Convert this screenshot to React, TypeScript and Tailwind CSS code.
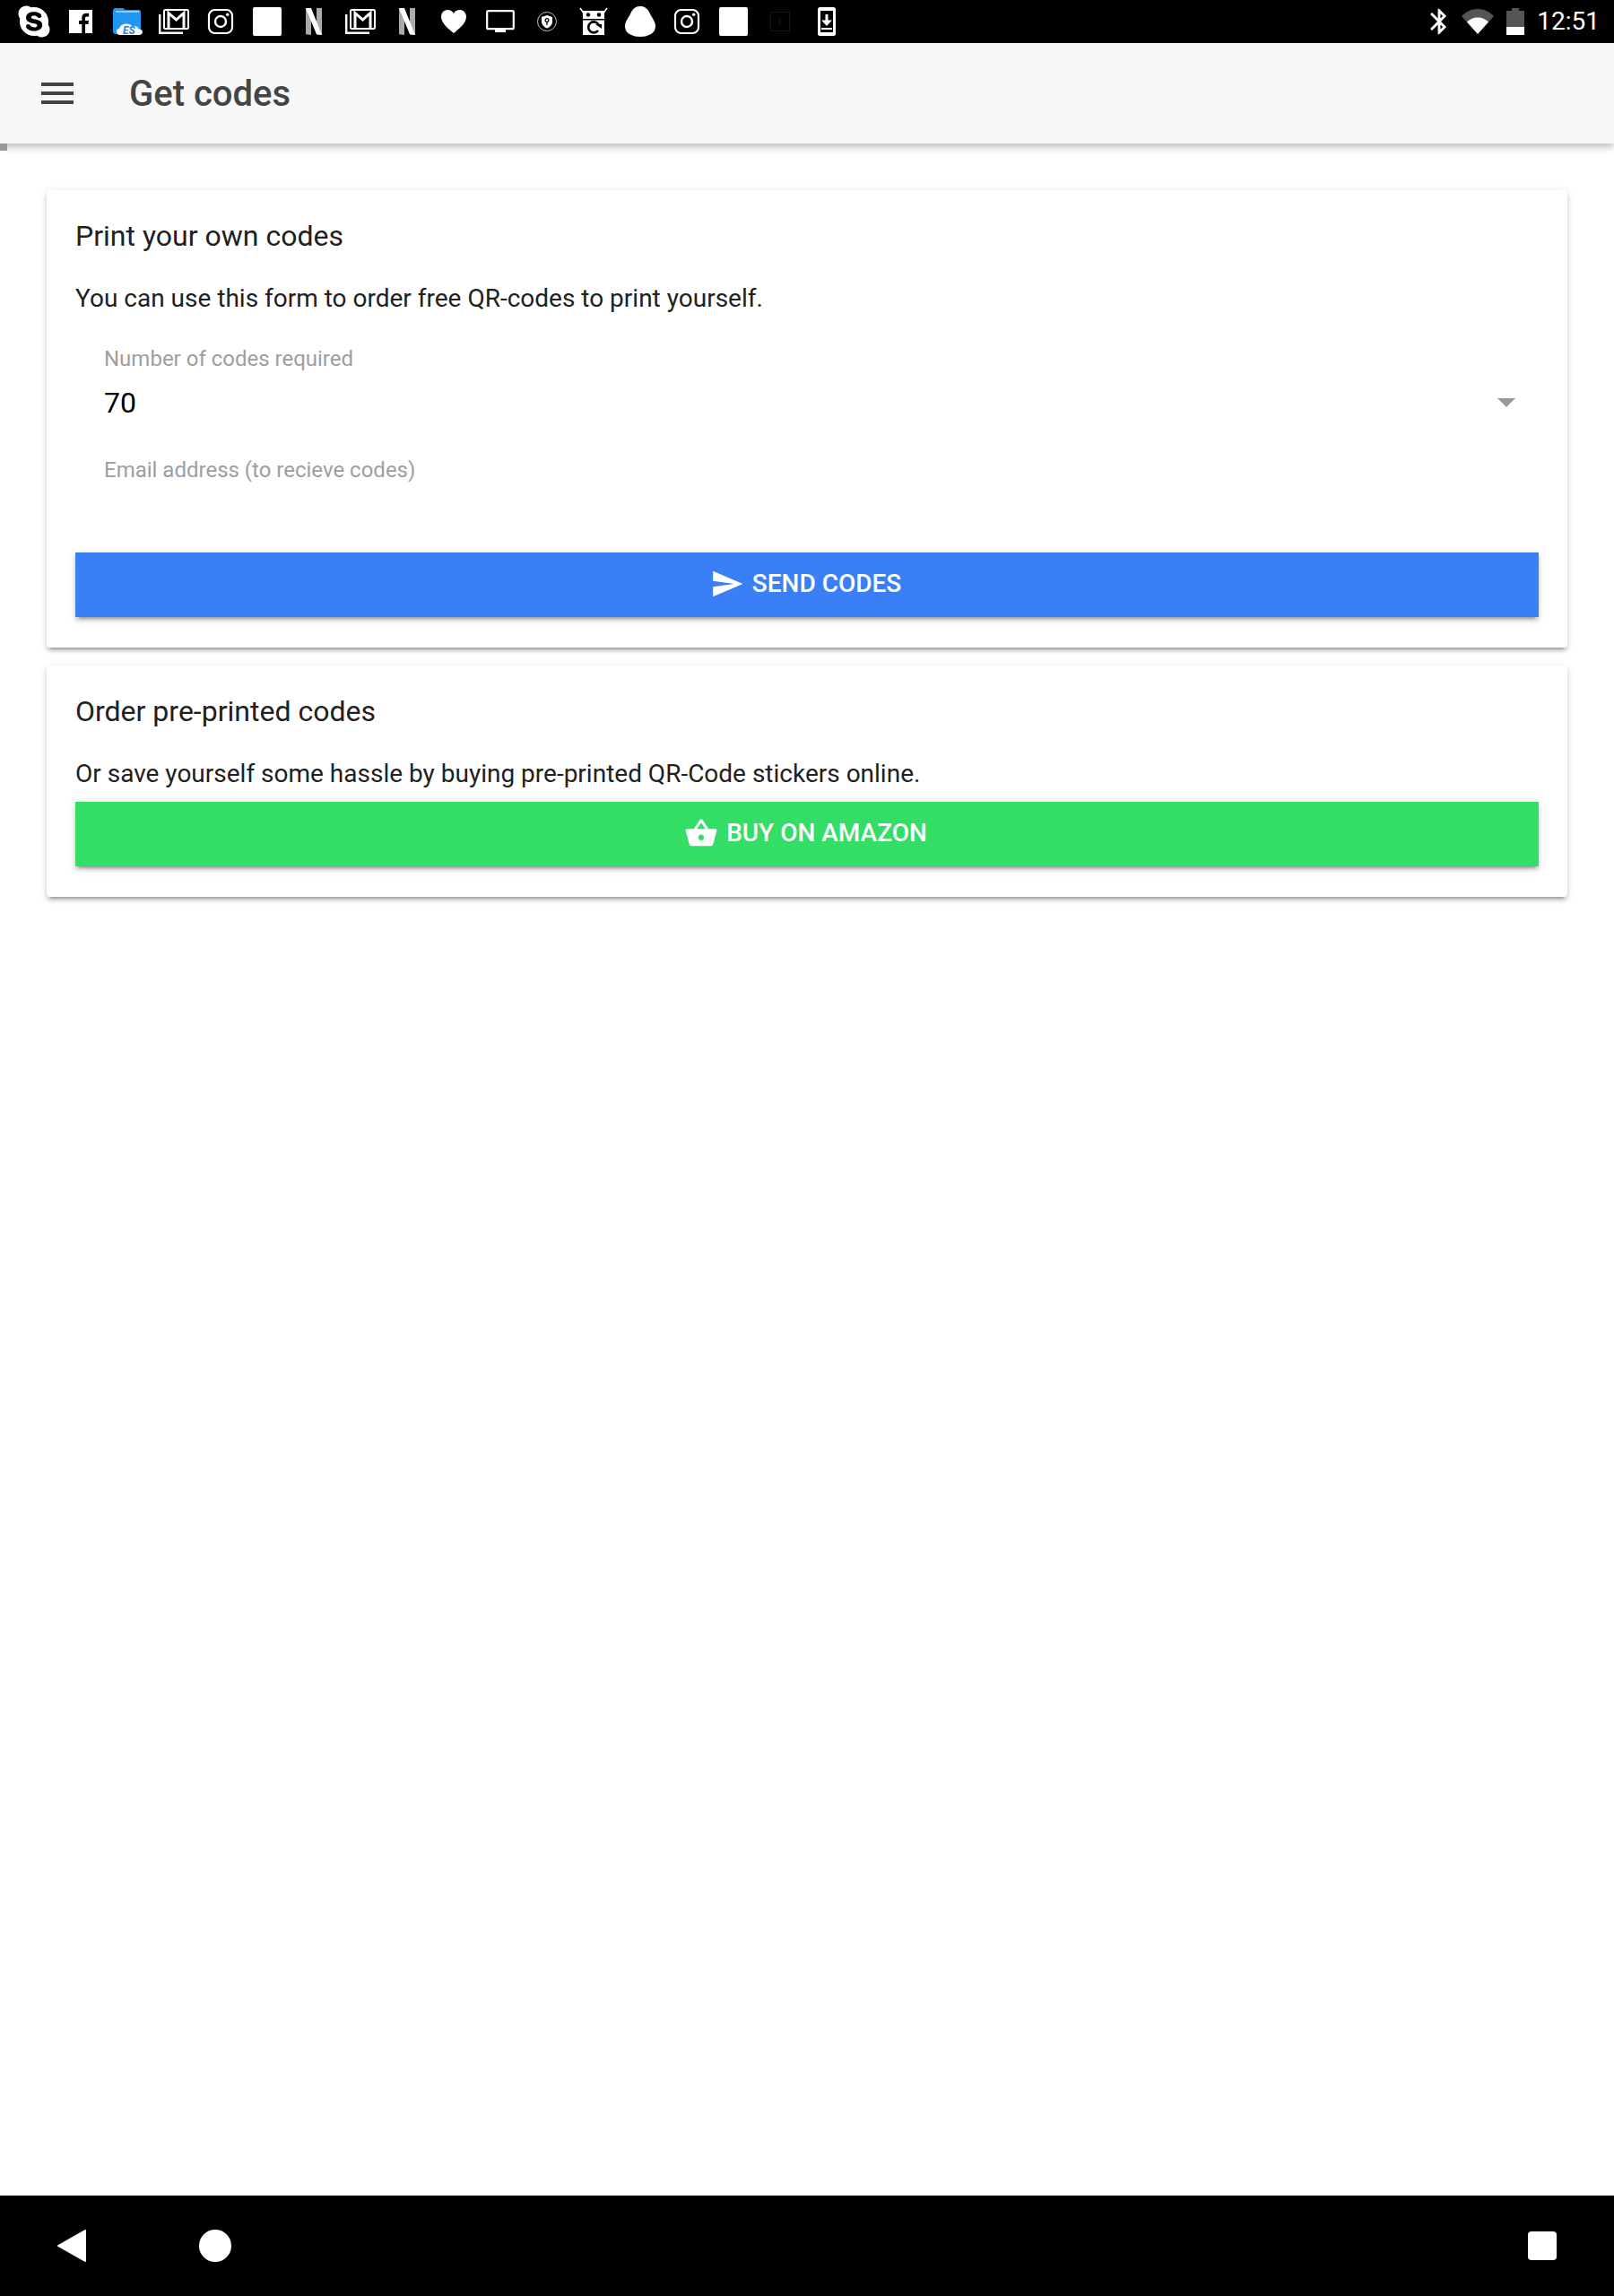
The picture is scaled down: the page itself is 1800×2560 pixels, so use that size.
import { FaSkype } from "react-icons/fa";
import { MdMenu, MdSend, MdShoppingBasket, MdBluetooth } from "react-icons/md";

const font = "font-['Roboto',sans-serif]";

function FacebookIcon() {
  return (
    <svg width="26" height="26" viewBox="0 0 26 26">
      <path fill="#fff" d="M0 0h26v26h-8V16h3.400l.6-4h-4V9.500c0-1.200.5-2 2-2h2.200V4c-.6-.1-1.700-.2-2.900-.2-3 0-5 1.800-5 5V12H11v4h3.300v10H0z" />
    </svg>
  );
}

function EsIcon() {
  return (
    <svg width="34" height="30" viewBox="0 0 34 30">
      <path fill="#2196f3" d="M1 3a3 3 0 0 1 3-3h8l3 2h15a2 2 0 0 1 2 2v22a3 3 0 0 1-3 3H4a3 3 0 0 1-3-3z" />
      <path fill="#90caf9" d="M4 3h26v2H4z" />
      <path fill="#fff" d="M9 30c-3 0-4-2-4-4 0-2 1.500-3 3-3.300C9 20 11.500 17.500 16 17.500c3 0 5 1 6 2.500 1.500-.2 5-.2 6 1 1 1 1.500 1.500 1.800 2.500 2 .2 4.200 1 4.200 3s-1.500 3.500-4 3.500z" />
      <text x="12" y="28.500" fontSize="12" fontWeight="700" fontStyle="italic" fill="#1d86ea" fontFamily="Roboto, sans-serif">ES</text>
    </svg>
  );
}

function MailStackIcon() {
  return (
    <svg width="34" height="28" viewBox="0 0 34 28" fill="none" stroke="#fff" strokeWidth="2">
      <path d="M1.200 6v20.800H27" strokeWidth="2.400" />
      <rect x="6" y="1.100" width="27" height="21" rx="1.500" />
      <path strokeWidth="3" d="M11 21V4.500l8.500 7.500L28 4.500V21" />
    </svg>
  );
}

function InstagramIcon() {
  return (
    <svg width="30" height="30" viewBox="0 0 30 30" fill="none" stroke="#fff">
      <rect x="2" y="2" width="26" height="26" rx="6.500" strokeWidth="2.200" />
      <circle cx="15" cy="15" r="6" strokeWidth="2.400" />
      <circle cx="22.700" cy="7.300" r="1.700" fill="#fff" stroke="none" />
    </svg>
  );
}

function SquareIcon() {
  return <div className="h-8 w-8 rounded-[2px] bg-white" />;
}

function NetflixIcon() {
  return (
    <svg width="18" height="30" viewBox="0 0 18 30">
      <path fill="#aaa" d="M0 0h6v30l-6-.8zM12 0h6v30l-6-.8z" />
      <path fill="#fff" d="M0 0h6l12 30-6-.8z" />
    </svg>
  );
}

function HeartIcon() {
  return (
    <svg width="30" height="28" viewBox="0 0 30 28">
      <path fill="#fff" d="M15 27C9 22 1 16 1 8.500 1 4 4.500 1 8 1c3 0 5.500 1.500 7 4 1.500-2.500 4-4 7-4 3.500 0 7 3 7 7.500C29 16 21 22 15 27z" />
    </svg>
  );
}

function MonitorIcon() {
  return (
    <svg width="32" height="26" viewBox="0 0 32 26">
      <rect x="1.200" y="1.200" width="29.600" height="20" rx="1.500" fill="none" stroke="#fff" strokeWidth="2.200" />
      <path fill="#fff" d="M10 22h12v3H10z" />
    </svg>
  );
}

function ShieldKeyIcon() {
  return (
    <svg width="24" height="24" viewBox="0 0 24 24">
      <circle cx="12" cy="12" r="10.500" fill="none" stroke="#bbb" strokeWidth="1" />
      <path fill="#fff" d="M12 5l6 2v5c0 3.500-2.500 6-6 7.500C8.500 18 6 15.500 6 12V7z" />
      <circle cx="12" cy="10.500" r="1.900" fill="none" stroke="#000" strokeWidth="1.200" />
      <path stroke="#000" strokeWidth="1.300" d="M12 12v4" />
    </svg>
  );
}

function RobotIcon() {
  return (
    <svg width="32" height="32" viewBox="0 0 32 32">
      <path stroke="#fff" strokeWidth="1.500" d="M1 1l3.500 5M31 1l-3.500 5" />
      <path fill="#fff" d="M4 4h24v9H4zM4 14.500h24V31H4z" />
      <circle cx="10" cy="8.500" r="2.200" fill="#000" />
      <circle cx="22" cy="8.500" r="2.200" fill="#000" />
      <path fill="none" stroke="#000" strokeWidth="2.600" d="M21 26a6 6 0 1 1 .5-6.500" />
      <path fill="#000" d="M18 19h7v5z" />
    </svg>
  );
}

function BlobIcon() {
  return (
    <svg width="34" height="34" viewBox="0 0 34 34">
      <path fill="#fff" d="M17 0c4.500 0 7.500 2 9.500 5.500 1.500 3 2.500 5 5 9 1.500 2.500 2.500 5 2.500 7.500 0 5-2.500 7.500-6 9.500-3 1.700-7 2.500-11 2.500s-8-.8-11-2.500c-3.500-2-6-4.500-6-9.500 0-2.500 1-5 2.500-7.500 2.500-4 3.500-6 5-9C9.500 2 12.500 0 17 0z" />
    </svg>
  );
}

function DimIcon() {
  return (
    <svg width="22" height="22" viewBox="0 0 22 22">
      <rect x=".5" y=".5" width="21" height="21" fill="none" stroke="#171717" />
      <path stroke="#222" d="M11 8v6" />
    </svg>
  );
}

function DownloadPhoneIcon() {
  return (
    <svg width="20" height="32" viewBox="0 0 20 32">
      <rect width="20" height="32" rx="2.500" fill="#fff" />
      <path fill="#000" d="M3 4h14v24H3z" />
      <path fill="#fff" d="M8.500 8h3v6.500H16L10 21 4 14.500h4.500zM4 23h12v2H4z" />
    </svg>
  );
}

function WifiIcon() {
  return (
    <svg width="36" height="28" viewBox="0 0 36 28">
      <path fill="#555" d="M0 8C5 3 11 0 18 0s13 3 18 8L18 28z" />
      <path fill="#fff" d="M6 14.500C9 11.500 13 9.500 18 9.500s9 2 12 5L18 28z" />
    </svg>
  );
}

function BatteryIcon() {
  return (
    <svg width="20" height="30" viewBox="0 0 20 30">
      <path fill="#555" d="M6 0h8v3h6v20H0V3h6z" />
      <path fill="#fff" d="M0 21h20v9H0z" />
    </svg>
  );
}

const notifications = [
  <FaSkype key="a" size={40} color="#fff" />,
  <FacebookIcon key="b" />,
  <EsIcon key="c" />,
  <MailStackIcon key="d" />,
  <InstagramIcon key="e" />,
  <SquareIcon key="f" />,
  <NetflixIcon key="g" />,
  <MailStackIcon key="h" />,
  <NetflixIcon key="i" />,
  <HeartIcon key="j" />,
  <MonitorIcon key="k" />,
  <ShieldKeyIcon key="l" />,
  <RobotIcon key="m" />,
  <BlobIcon key="n" />,
  <InstagramIcon key="o" />,
  <SquareIcon key="p" />,
  <DimIcon key="q" />,
  <DownloadPhoneIcon key="r" />,
];

function StatusBar() {
  return (
    <div className="flex h-12 shrink-0 items-center bg-black pl-3 pr-4">
      {notifications.map((icon) => (
        <div key={icon.key} className="flex h-12 w-[52px] items-center justify-center">
          {icon}
        </div>
      ))}
      <div className="ml-auto flex items-center">
        <MdBluetooth size={34} color="#fff" />
        <div className="ml-[8px]">
          <WifiIcon />
        </div>
        <div className="ml-[14px]">
          <BatteryIcon />
        </div>
        <span className="ml-[14px] text-[28px] leading-none text-white">12:51</span>
      </div>
    </div>
  );
}

function CardButton({ color, icon, label }: { color: string; icon: React.ReactNode; label: string }) {
  return (
    <button className={`flex h-[72px] w-full items-center justify-center gap-[9px] pb-[2px] pr-[3px] text-[28px] font-medium text-white shadow-[0_6px_2px_-4px_rgba(0,0,0,0.2),0_4px_4px_0_rgba(0,0,0,0.14),0_2px_10px_0_rgba(0,0,0,0.12)] ${color}`}>
      {icon}
      {label}
    </button>
  );
}

export default function App() {
  return (
    <div className={`relative flex min-h-[2560px] flex-col bg-white ${font}`}>
      <StatusBar />
      <header className="flex h-[112px] shrink-0 items-center bg-[#f8f8f8] pl-10 shadow-[0_4px_8px_rgba(0,0,0,0.25)]">
        <MdMenu size={48} color="#444" />
        <h1 className="ml-[56px] pt-[1px] text-[40px] font-medium text-[#444]">Get codes</h1>
      </header>
      <div className="absolute left-0 top-[160px] h-2 w-2 bg-[#999]" />
      <main className="flex flex-1 flex-col gap-5 px-[52px] pt-[52px]">
        <section className="h-[510px] rounded-[4px] bg-white px-8 shadow-[0_6px_2px_-4px_rgba(0,0,0,0.2),0_4px_4px_0_rgba(0,0,0,0.14),0_2px_10px_0_rgba(0,0,0,0.12)]">
          <h2 className="mt-[31px] text-[32px] leading-[40px] text-[#212121]">Print your own codes</h2>
          <p className="mt-[30px] text-[28px] leading-[40px] text-[#212121]">
            You can use this form to order free QR-codes to print yourself.
          </p>
          <div className="mt-[31px] px-8">
            <div className="text-[24px] leading-[32px] text-[#9e9e9e]">Number of codes required</div>
            <div className="mt-[9px] flex items-center justify-between">
              <span className="text-[32px] leading-[48px] text-black">70</span>
              <div className="-mr-[6px] h-0 w-0 border-x-[10px] border-t-[10px] border-x-transparent border-t-[#999]" />
            </div>
            <div className="mt-[35px] text-[24px] leading-[32px] text-[#9e9e9e]">Email address (to recieve codes)</div>
          </div>
          <div className="mt-[76px]">
            <CardButton color="bg-[#3b7ff6]" icon={<MdSend size={38} />} label="SEND CODES" />
          </div>
        </section>
        <section className="h-[258px] rounded-[4px] bg-white px-8 shadow-[0_6px_2px_-4px_rgba(0,0,0,0.2),0_4px_4px_0_rgba(0,0,0,0.14),0_2px_10px_0_rgba(0,0,0,0.12)]">
          <h2 className="mt-[31px] text-[32px] leading-[40px] text-[#212121]">Order pre-printed codes</h2>
          <p className="mt-[30px] text-[28px] leading-[40px] text-[#212121]">
            Or save yourself some hassle by buying pre-printed QR-Code stickers online.
          </p>
          <div className="mt-[11px]">
            <CardButton color="bg-[#33dd66]" icon={<MdShoppingBasket size={38} />} label="BUY ON AMAZON" />
          </div>
        </section>
      </main>
      <nav className="flex h-[112px] shrink-0 items-center bg-black pl-16 pr-16">
        <svg width="32" height="36" viewBox="0 0 32 36">
          <path fill="#fff" stroke="#fff" strokeWidth="2" strokeLinejoin="round" d="M31 1v34L1 18z" />
        </svg>
        <div className="ml-[126px] h-9 w-9 rounded-full bg-white" />
        <div className="ml-auto h-8 w-8 rounded-[4px] bg-white" />
      </nav>
    </div>
  );
}
